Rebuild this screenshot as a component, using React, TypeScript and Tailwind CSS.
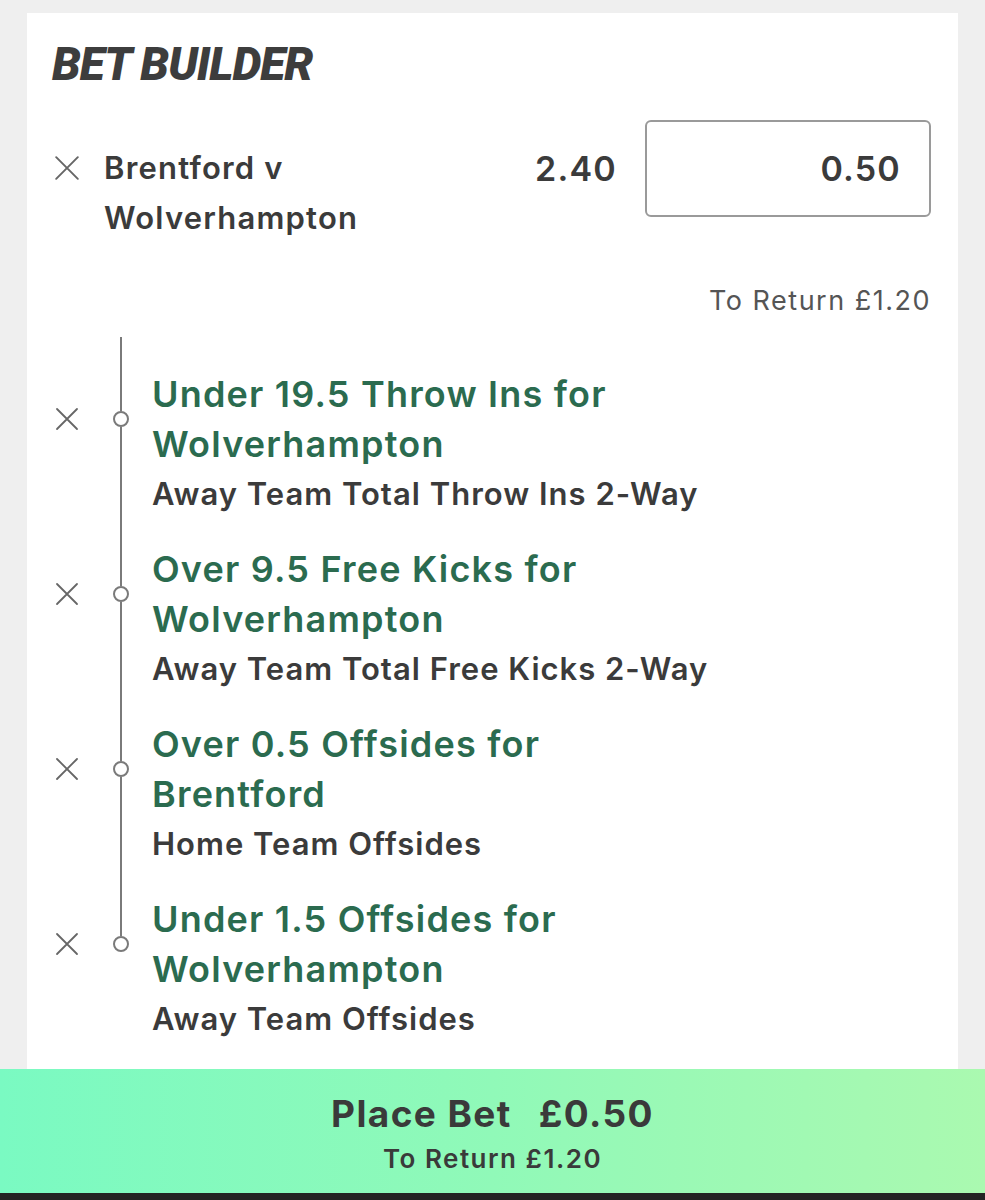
import React from 'react'

const legs = [
  { title: ['Under 19.5 Throw Ins for', 'Wolverhampton'], market: 'Away Team Total Throw Ins 2-Way' },
  { title: ['Over 9.5 Free Kicks for', 'Wolverhampton'], market: 'Away Team Total Free Kicks 2-Way' },
  { title: ['Over 0.5 Offsides for', 'Brentford'], market: 'Home Team Offsides' },
  { title: ['Under 1.5 Offsides for', 'Wolverhampton'], market: 'Away Team Offsides' },
]

const Cross = ({ size }: { size: number }) => (
  <svg width={size} height={size} viewBox="0 0 24 24" fill="none" stroke="#666" strokeWidth="1.8" strokeLinecap="round">
    <path d="M2 2 L22 22 M22 2 L2 22" />
  </svg>
)

export default function App() {
  return (
    <div className="w-[985px] h-[1200px] bg-[#efefef] flex flex-col overflow-hidden" style={{ fontFamily: 'Inter, "Noto Sans", sans-serif' }}>
      <div className="ml-[27px] mt-[13px] w-[931px] flex-1 bg-white pl-[25px] pr-[27px] pt-[28px] text-[#3b3b3b]">
        {/* Title */}
        <h1
          className="text-[46px] leading-none font-black italic tracking-[-1px] text-[#3d3d3d]"
          style={{ fontFamily: 'Roboto, "Liberation Sans", sans-serif' }}
        >
          BET BUILDER
        </h1>

        {/* Selection header */}
        <div className="mt-[33px] flex items-start">
          <div className="mt-[23px] flex flex-1 items-start">
            <div className="ml-[2px] mt-[12px] shrink-0">
              <Cross size={26} />
            </div>
            <div className="ml-[24px] text-[31px] leading-[50px] font-semibold tracking-[1.2px]">
              <div>Brentford v</div>
              <div>Wolverhampton</div>
            </div>
          </div>
          <div className="flex h-[97px] items-center text-[34px] font-semibold tracking-[1.2px]">2.40</div>
          <div className="ml-[28px] flex h-[97px] w-[286px] items-center justify-end rounded-[6px] border-2 border-[#9a9a9a] pr-[28px] text-[34px] font-semibold tracking-[1.2px]">
            0.50
          </div>
        </div>

        <div className="mt-[43px] text-right text-[27px] leading-[30px] tracking-[1.5px] text-[#555]">To Return £1.20</div>

        {/* Legs timeline */}
        <div className="mt-[21px]">
          <div className="flex">
            <div className="w-[62px]" />
            <div className="flex w-[14px] justify-center">
              <div className="h-[32px] w-[2px] bg-[#7a7a7a]" />
            </div>
          </div>
          {legs.map((leg, i) => (
            <div key={i} className="flex h-[175px]">
              <div className="w-[62px] pl-[3px] pt-[38px]">
                <Cross size={24} />
              </div>
              <div className="flex w-[14px] flex-col items-center">
                <div className="h-[42px] w-[2px] bg-[#7a7a7a]" />
                <div className="h-[16px] w-[16px] shrink-0 rounded-full border-2 border-[#7a7a7a] bg-white" />
                <div className={'w-[2px] flex-1 ' + (i === legs.length - 1 ? 'bg-transparent' : 'bg-[#7a7a7a]')} />
              </div>
              <div className="ml-[24px]">
                <div className="text-[36px] leading-[50px] font-semibold tracking-[1.2px] text-[#2b6b4f]">
                  <div>{leg.title[0]}</div>
                  <div>{leg.title[1]}</div>
                </div>
                <div className="text-[31px] leading-[50px] font-semibold tracking-[1px] text-[#3b3b3b]">{leg.market}</div>
              </div>
            </div>
          ))}
        </div>
      </div>

      {/* Place bet bar */}
      <div className="flex h-[124px] shrink-0 flex-col items-center bg-gradient-to-r from-[#7afac2] via-[#90f9b8] to-[#aaf9b0] pt-[22px] text-[#3a3a3a]">
        <div className="flex gap-[27px] text-[37px] leading-[46px] font-bold tracking-[1.4px]">
          <span>Place Bet</span>
          <span>£0.50</span>
        </div>
        <div className="mt-[6px] text-[26px] leading-[32px] font-semibold tracking-[1.5px]">To Return £1.20</div>
      </div>
      <div className="h-[8px] shrink-0 bg-[#232323]" />
    </div>
  )
}
